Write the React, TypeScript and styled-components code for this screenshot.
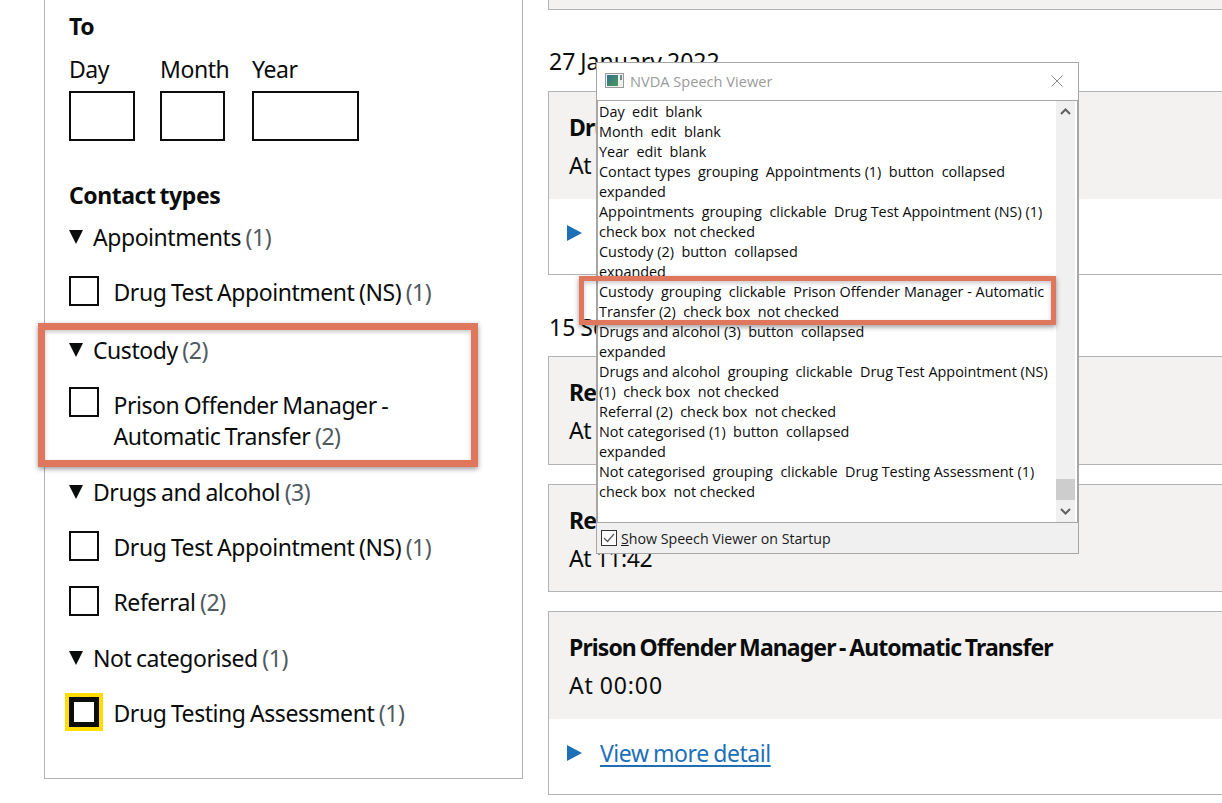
import React from "react";
import styled, { createGlobalStyle } from "styled-components";

const Global = createGlobalStyle`
  html, body { margin: 0; padding: 0; background: #fff; }
  body { font-family: "Noto Sans", "Liberation Sans", sans-serif; color: #0b0c0c; }
`;

const Page = styled.div`
  position: relative;
  width: 1222px;
  height: 803px;
  overflow: hidden;
  display: flex;
  align-items: flex-start;
  gap: 25px;
  padding-left: 44px;
  box-sizing: border-box;
`;

const FilterPanel = styled.aside`
  flex: 0 0 479px;
  box-sizing: border-box;
  height: 779px;
  border: 1px solid #b1b4b6;
  border-top: 0;
  padding: 10px 0 0 24px;
  font-size: 23px;
  line-height: 30px;
  letter-spacing: -0.45px;
  word-spacing: -1px;
`;

const Legend = styled.div<{ $top?: number }>`
  font-weight: 700;
  line-height: 32px;
  letter-spacing: -0.45px;
  word-spacing: -1.5px;
  margin-top: ${(p) => p.$top ?? 0}px;
`;

const DateFields = styled.div`
  display: flex;
  margin-top: 12px;
`;

const DateField = styled.label<{ $width: number; $gap: number }>`
  display: block;
  width: ${(p) => p.$width}px;
  margin-right: ${(p) => p.$gap}px;
`;

const DateBox = styled.div`
  box-sizing: border-box;
  height: 50px;
  margin-top: 7px;
  border: 2px solid #0b0c0c;
`;

const Group = styled.section`
  margin-top: 24px;
  &:first-of-type { margin-top: 11px; }
`;

const Summary = styled.div<{ $low?: boolean }>`
  display: flex;
  align-items: center;
  gap: 10px;
  padding: ${(p) => (p.$low ? "2px 0 0" : "0 0 2px")};
`;

const DownArrow = styled.span`
  width: 0;
  height: 0;
  border-left: 7.5px solid transparent;
  border-right: 7.5px solid transparent;
  border-top: 14px solid #0b0c0c;
`;

const Count = styled.span`
  color: #505a5f;
`;

const Row = styled.div<{ $wrapped?: boolean }>`
  display: flex;
  gap: 14.5px;
  margin-top: 22px;
  padding-bottom: ${(p) => (p.$wrapped ? 1 : 0)}px;
`;

const Check = styled.span<{ $focus?: boolean }>`
  flex: 0 0 30px;
  box-sizing: border-box;
  height: 30px;
  background: #fff;
  border: ${(p) => (p.$focus ? 5 : 2)}px solid #0b0c0c;
  box-shadow: ${(p) => (p.$focus ? "0 0 0 4px #ffdd00" : "none")};
`;

const RowLabel = styled.span<{ $wrapped?: boolean }>`
  padding: ${(p) => (p.$wrapped ? "3px 0 0" : "1px 0 1px")};
  line-height: 31px;
  max-width: 330px;
`;

const Timeline = styled.main`
  flex: 0 0 720px;
  font-size: 23px;
  line-height: 32px;
  letter-spacing: -0.45px;
  word-spacing: -1px;
`;

const TopCardEnd = styled.div`
  height: 9px;
  background: #f3f2f1;
  border: 1px solid #b1b4b6;
  border-top: 0;
`;

const DateHeading = styled.h2<{ $top: number; $bottom: number }>`
  margin: ${(p) => p.$top}px 0 ${(p) => p.$bottom}px;
  padding-left: 1px;
  font: inherit;
  letter-spacing: 0;
  line-height: 30px;
  padding-bottom: 2px;
`;

const Card = styled.article`
  border: 1px solid #b1b4b6;
  & + & { margin-top: 19px; }
`;

const CardHead = styled.header`
  background: #f3f2f1;
  padding: 19px 20px 17.5px;
`;

const CardTitle = styled.div`
  font-weight: 700;
  letter-spacing: -0.9px;
  word-spacing: -1.5px;
  margin-bottom: 6px;
`;

const CardTime = styled.div<{ $tracking: number }>`
  letter-spacing: ${(p) => p.$tracking}px;
`;

const CardDetail = styled.div`
  display: flex;
  align-items: center;
  gap: 18px;
  padding: 18px 18px 25px;
`;

const RightArrow = styled.span`
  width: 0;
  height: 0;
  border-top: 8.5px solid transparent;
  border-bottom: 8.5px solid transparent;
  border-left: 15px solid #1d70b8;
`;

const DetailLink = styled.a`
  color: #1d70b8;
  text-decoration: underline;
  text-decoration-thickness: 2px;
  text-underline-offset: 3px;
`;

const Callout = styled.div<{ $x: number; $y: number; $w: number; $h: number; $b: number }>`
  position: absolute;
  left: ${(p) => p.$x}px;
  top: ${(p) => p.$y}px;
  width: ${(p) => p.$w}px;
  height: ${(p) => p.$h}px;
  box-sizing: border-box;
  border: ${(p) => p.$b}px solid #e0775c;
  box-shadow: 0 2px 5px rgba(0, 0, 0, 0.4), inset 0 2px 4px rgba(0, 0, 0, 0.22);
  z-index: 5;
`;

const Viewer = styled.div`
  position: absolute;
  left: 596px;
  top: 62px;
  width: 483px;
  height: 492px;
  box-sizing: border-box;
  border: 1px solid #a6a6a6;
  background: #fff;
  display: flex;
  flex-direction: column;
  font-family: "Open Sans", "Noto Sans", sans-serif;
  z-index: 3;
`;

const TitleBar = styled.div`
  flex: 0 0 37px;
  box-sizing: border-box;
  display: flex;
  align-items: center;
  gap: 6px;
  padding: 0 15px 2px 8px;
  color: #9a9a9a;
  font-size: 14.6px;
`;

const TitleText = styled.span`
  flex: 1;
`;

const ListArea = styled.div`
  flex: 1;
  display: flex;
  box-sizing: border-box;
  padding-right: 2px;
  border: 1px solid #a6a6a6;
  min-height: 0;
`;

const Lines = styled.div`
  flex: 1;
  padding: 1px 0 0 1px;
  font-size: 14.4px;
  line-height: 20px;
  color: #0b0c0c;
  white-space: pre;
`;

const Scrollbar = styled.div`
  flex: 0 0 19px;
  background: #f0f0f0;
  display: flex;
  flex-direction: column;
  align-items: center;
  justify-content: space-between;
  padding: 7px 0;
  position: relative;
`;

const Thumb = styled.div`
  position: absolute;
  left: 0;
  right: 0;
  top: 378px;
  height: 21px;
  background: #cdcdcd;
`;

const ViewerFooter = styled.div`
  flex: 0 0 30px;
  display: flex;
  align-items: center;
  gap: 4px;
  padding-left: 4px;
  background: #f0f0f0;
  font-size: 14.2px;
  color: #1a1a1a;
`;

const lines = [
  "Day  edit  blank",
  "Month  edit  blank",
  "Year  edit  blank",
  "Contact types  grouping  Appointments (1)  button  collapsed",
  "expanded",
  "Appointments  grouping  clickable  Drug Test Appointment (NS) (1)",
  "check box  not checked",
  "Custody (2)  button  collapsed",
  "expanded",
  "Custody  grouping  clickable  Prison Offender Manager - Automatic",
  "Transfer (2)  check box  not checked",
  "Drugs and alcohol (3)  button  collapsed",
  "expanded",
  "Drugs and alcohol  grouping  clickable  Drug Test Appointment (NS)",
  "(1)  check box  not checked",
  "Referral (2)  check box  not checked",
  "Not categorised (1)  button  collapsed",
  "expanded",
  "Not categorised  grouping  clickable  Drug Testing Assessment (1)",
  "check box  not checked",
];

const Chevron = ({ up }: { up?: boolean }) => (
  <svg width="11" height="7" viewBox="0 0 11 7" fill="none">
    <path d={up ? "M1 6L5.5 1.5L10 6" : "M1 1L5.5 5.5L10 1"} stroke="#606060" strokeWidth="2" />
  </svg>
);

const AppIcon = () => (
  <svg width="19" height="15" viewBox="0 0 19 15">
    <defs>
      <linearGradient id="nvda" x1="0" y1="0" x2="1" y2="1">
        <stop offset="0" stopColor="#2f6f8f" />
        <stop offset="1" stopColor="#4f9a5a" />
      </linearGradient>
    </defs>
    <rect x="0.5" y="0.5" width="18" height="14" fill="#eef0f0" stroke="#9a9a9a" />
    <rect x="2" y="2" width="11" height="11" fill="url(#nvda)" />
    <rect x="15" y="2" width="2" height="5" fill="#6f8f8f" />
  </svg>
);

const Close = () => (
  <svg width="12" height="12" viewBox="0 0 12 12" fill="none">
    <path d="M0.5 0.5L11.5 11.5M11.5 0.5L0.5 11.5" stroke="#8a8a8a" strokeWidth="1" />
  </svg>
);

const Tick = () => (
  <svg width="16" height="16" viewBox="0 0 16 16" fill="none">
    <rect x="0.5" y="0.5" width="15" height="15" fill="#fff" stroke="#333" />
    <path d="M3 8L6.5 11.5L13 4" stroke="#555" strokeWidth="1.2" />
  </svg>
);

const Choice = ({ label, count, focus, wrapped }: { label: string; count: number; focus?: boolean; wrapped?: boolean }) => (
  <Row $wrapped={wrapped}>
    <Check $focus={focus} />
    <RowLabel $wrapped={wrapped}>
      {label} <Count>({count})</Count>
    </RowLabel>
  </Row>
);

const GroupHead = ({ label, count, low }: { label: string; count: number; low?: boolean }) => (
  <Summary $low={low}>
    <DownArrow />
    <span>
      {label} <Count>({count})</Count>
    </span>
  </Summary>
);

const Entry = ({ title, time, detail, tracking = -0.45 }: { title: string; time: string; detail?: boolean; tracking?: number }) => (
  <Card>
    <CardHead>
      <CardTitle>{title}</CardTitle>
      <CardTime $tracking={tracking}>{time}</CardTime>
    </CardHead>
    {detail && (
      <CardDetail>
        <RightArrow />
        <DetailLink href="#">View more detail</DetailLink>
      </CardDetail>
    )}
  </Card>
);

export default function App() {
  return (
    <>
      <Global />
      <Page>
        <FilterPanel>
          <Legend>To</Legend>
          <DateFields>
            <DateField $width={66} $gap={25}>
              Day
              <DateBox />
            </DateField>
            <DateField $width={65} $gap={27}>
              Month
              <DateBox />
            </DateField>
            <DateField $width={107} $gap={0}>
              Year
              <DateBox />
            </DateField>
          </DateFields>
          <Legend $top={38}>Contact types</Legend>
          <Group>
            <GroupHead label="Appointments" count={1} />
            <Choice label="Drug Test Appointment (NS)" count={1} />
          </Group>
          <Group>
            <GroupHead label="Custody" count={2} low />
            <Choice label="Prison Offender Manager - Automatic Transfer" count={2} wrapped />
          </Group>
          <Group>
            <GroupHead label="Drugs and alcohol" count={3} />
            <Choice label="Drug Test Appointment (NS)" count={1} />
            <Choice label="Referral" count={2} />
          </Group>
          <Group>
            <GroupHead label="Not categorised" count={1} />
            <Choice label="Drug Testing Assessment" count={1} focus />
          </Group>
        </FilterPanel>
        <Timeline>
          <TopCardEnd />
          <DateHeading $top={36} $bottom={13}>27 January 2022</DateHeading>
          <Entry title="Drug Test Appointment (NS)" time="At 10:00" detail />
          <DateHeading $top={37.5} $bottom={12}>15 September 2021</DateHeading>
          <Entry title="Referral" time="At 11:42" />
          <Entry title="Referral" time="At 11:42" />
          <Entry title="Prison Offender Manager - Automatic Transfer" time="At 00:00" detail tracking={0.9} />
        </Timeline>
        <Viewer>
          <TitleBar>
            <AppIcon />
            <TitleText>NVDA Speech Viewer</TitleText>
            <Close />
          </TitleBar>
          <ListArea>
            <Lines>
              {lines.map((l) => (
                <div key={l}>{l}</div>
              ))}
            </Lines>
            <Scrollbar>
              <Chevron up />
              <Thumb />
              <Chevron />
            </Scrollbar>
          </ListArea>
          <ViewerFooter>
            <Tick />
            <span>
              <u>S</u>how Speech Viewer on Startup
            </span>
          </ViewerFooter>
        </Viewer>
        <Callout $x={38} $y={323} $w={440} $h={144} $b={7} />
        <Callout $x={579} $y={276} $w={477} $h={49} $b={5} />
      </Page>
    </>
  );
}
